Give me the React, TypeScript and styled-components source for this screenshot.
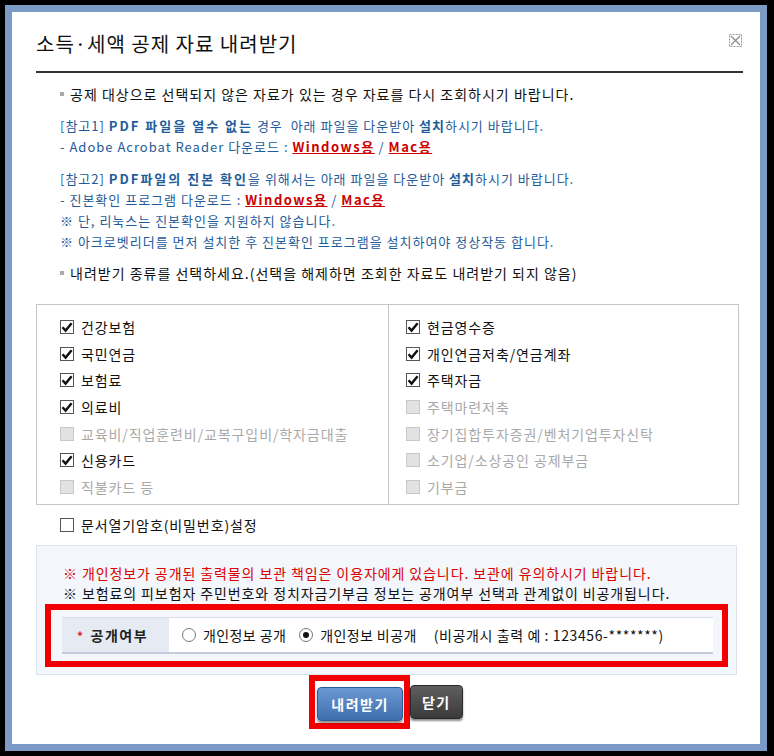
import React from "react";
import styled, { createGlobalStyle } from "styled-components";

const GlobalStyle = createGlobalStyle`
  body {
    margin: 0;
    background: #000;
    font-family: "Noto Sans CJK KR", "Liberation Sans", sans-serif;
  }
`;

const Window = styled.div`
  box-sizing: border-box;
  margin: 5px 0 0 5px;
  width: 762px;
  height: 746px;
  border: 7px solid #7b9ac5;
  background: #fff;
  padding: 0 17px 0 24px;
`;

const Header = styled.div`
  box-sizing: border-box;
  display: flex;
  justify-content: space-between;
  align-items: center;
  height: 61px;
  padding-top: 3px;
  border-bottom: 2px solid #333;
`;

const Title = styled.h1`
  margin: 0;
  font-size: 20px;
  font-weight: normal;
  color: #111;
  letter-spacing: 1px;
`;

const CloseIcon = styled.span`
  align-self: flex-start;
  margin-top: 19px;
  margin-right: 1px;
  display: flex;
`;

const Bullet = styled.p`
  display: flex;
  align-items: center;
  gap: 6px;
  margin: 11px 0 0;
  padding-left: 24px;
  font-size: 14px;
  line-height: 20px;
  letter-spacing: 1px;
  color: #111;
  white-space: nowrap;

  &::before {
    content: "";
    width: 4px;
    height: 4px;
    background: #aaa;
  }
`;

const RefBlock = styled.div`
  margin-top: 11px;
  padding-left: 24px;
  font-size: 13px;
  line-height: 21px;
  letter-spacing: 1px;
  color: #1f5c99;
`;

const Line = styled.div`
  white-space: nowrap;
`;

const Strong = styled.b`
  letter-spacing: 2px;
`;

const DownLink = styled.a`
  color: #cc0000;
  font-weight: bold;
  text-decoration: underline;
  letter-spacing: 1.5px;
`;

const KindBox = styled.div`
  display: grid;
  grid-template-columns: 351px 1fr;
  margin: 21px 4px 0 0;
  border: 1px solid #c6c6c6;
`;

const KindColumn = styled.div<{ $pad: number; $divider?: boolean }>`
  display: flex;
  flex-direction: column;
  padding: 9px 0 4px ${(p) => p.$pad}px;
  border-left: ${(p) => (p.$divider ? "1px solid #c6c6c6" : "none")};
`;

const CheckRow = styled.label<{ $disabled?: boolean }>`
  display: flex;
  align-items: center;
  gap: 7px;
  height: 26.6px;
  font-size: 14px;
  letter-spacing: 0.9px;
  white-space: nowrap;
  color: ${(p) => (p.$disabled ? "#a9a9a9" : "#111")};
`;

const PasswordRow = styled(CheckRow)`
  margin: 10px 0 0 24px;
  height: 20px;
`;

const Box = styled.span<{ $disabled?: boolean }>`
  box-sizing: border-box;
  flex: none;
  display: inline-flex;
  align-items: center;
  justify-content: center;
  width: 14px;
  height: 14px;
  border: 1px solid ${(p) => (p.$disabled ? "#c8c8c8" : "#555")};
  background: ${(p) => (p.$disabled ? "#e2e2e2" : "#fff")};
`;

const Panel = styled.div`
  margin: 10px 6px 0 0;
  padding: 17px 8px 7px;
  background: #f3f6fb;
  border: 1px solid #dde3ec;
`;

const Note = styled.p<{ $red?: boolean }>`
  margin: 0;
  padding-left: 18px;
  font-size: 14px;
  line-height: 20px;
  letter-spacing: 0.9px;
  white-space: nowrap;
  color: ${(p) => (p.$red ? "#d80000" : "#111")};
`;

const Highlight = styled.div`
  margin-top: 1px;
  padding: 7px 9px 7px 11px;
  border: 6px solid #f00000;
`;

const OpenTable = styled.div`
  display: grid;
  grid-template-columns: 107px 1fr;
  height: 37px;
  box-sizing: border-box;
  border-top: 1px solid #d9dfe8;
  border-bottom: 2px solid #c3ccd8;
  background: #fff;
`;

const HeadCell = styled.div`
  display: flex;
  align-items: center;
  gap: 6px;
  padding-left: 15px;
  background: #e6ebf3;
  font-size: 14px;
  font-weight: bold;
  letter-spacing: 1.5px;
  color: #222;

  &::before {
    content: "*";
    color: #e02020;
    font-size: 12px;
  }
`;

const ValueCell = styled.div`
  display: flex;
  align-items: center;
  padding-left: 13px;
  gap: 13px;
  font-size: 14px;
  letter-spacing: 0.4px;
  color: #111;
  white-space: nowrap;
`;

const RadioLabel = styled.label`
  display: flex;
  align-items: center;
  gap: 7px;
`;

const Radio = styled.span<{ $on?: boolean }>`
  box-sizing: border-box;
  flex: none;
  display: inline-flex;
  align-items: center;
  justify-content: center;
  width: 14px;
  height: 14px;
  border-radius: 50%;
  border: 1px solid #777;
  background: #fff;

  &::after {
    content: "";
    display: ${(p) => (p.$on ? "block" : "none")};
    width: 6px;
    height: 6px;
    border-radius: 50%;
    background: #111;
  }
`;

const Hint = styled.span`
  margin-left: 10px;
  letter-spacing: 0.6px;
`;

const ButtonRow = styled.div`
  display: flex;
  justify-content: center;
  align-items: center;
  margin-right: 7px;
`;

const FocusFrame = styled.div`
  padding: 6px 1px 2px 2px;
  border: 6px solid #f00000;
  display: flex;
`;

const Button = styled.button<{ $dark?: boolean }>`
  height: 34px;
  padding: 0 ${(p) => (p.$dark ? "11px" : "13px")};
  border: 1px solid ${(p) => (p.$dark ? "#2a2a2a" : "#2f5b94")};
  border-radius: 4px;
  background: ${(p) =>
    p.$dark
      ? "linear-gradient(#5f5f5f, #3a3a3a)"
      : "linear-gradient(#6b98d2, #3f6fae)"};
  box-shadow: 0 2px 2px rgba(0, 0, 0, 0.45);
  color: #fff;
  font-family: inherit;
  font-size: 14px;
  font-weight: bold;
  letter-spacing: 1.5px;
  cursor: pointer;
`;

const Check = ({ on, disabled }: { on?: boolean; disabled?: boolean }) => (
  <Box $disabled={disabled}>
    {on && (
      <svg width="12" height="12" viewBox="0 0 12 12">
        <path
          d="M1.5 6.2 L4.6 9.6 L10.6 2.2"
          fill="none"
          stroke="#111"
          strokeWidth="2.4"
        />
      </svg>
    )}
  </Box>
);

const left = [
  { t: "건강보험", on: true },
  { t: "국민연금", on: true },
  { t: "보험료", on: true },
  { t: "의료비", on: true },
  { t: "교육비/직업훈련비/교복구입비/학자금대출", off: true },
  { t: "신용카드", on: true },
  { t: "직불카드 등", off: true },
];

const right = [
  { t: "현금영수증", on: true },
  { t: "개인연금저축/연금계좌", on: true },
  { t: "주택자금", on: true },
  { t: "주택마련저축", off: true },
  { t: "장기집합투자증권/벤처기업투자신탁", off: true },
  { t: "소기업/소상공인 공제부금", off: true },
  { t: "기부금", off: true },
];

type Item = { t: string; on?: boolean; off?: boolean };

const KindList = ({ items }: { items: Item[] }) => (
  <>
    {items.map((it) => (
      <CheckRow key={it.t} $disabled={it.off}>
        <Check on={it.on} disabled={it.off} />
        {it.t}
      </CheckRow>
    ))}
  </>
);

export default function App() {
  return (
    <>
      <GlobalStyle />
      <Window>
        <Header>
          <Title>소득·세액 공제 자료 내려받기</Title>
          <CloseIcon>
            <svg width="13" height="13" viewBox="0 0 13 13">
              <rect
                x="0.5"
                y="0.5"
                width="12"
                height="12"
                fill="none"
                stroke="#9a9a9a"
                strokeDasharray="2 1"
              />
              <path d="M2 2 L11 11 M11 2 L2 11" stroke="#8a8a8a" strokeWidth="1.2" />
            </svg>
          </CloseIcon>
        </Header>

        <Bullet>
          공제 대상으로 선택되지 않은 자료가 있는 경우 자료를 다시 조회하시기 바랍니다.
        </Bullet>

        <RefBlock>
          <Line>
            [참고1] <Strong>PDF 파일을 열수 없는</Strong> 경우 &nbsp;아래 파일을 다운받아 <b>설치</b>하시기 바랍니다.
          </Line>
          <Line>
            - Adobe Acrobat Reader 다운로드 : <DownLink>Windows용</DownLink> / <DownLink>Mac용</DownLink>
          </Line>
        </RefBlock>

        <RefBlock>
          <Line>
            [참고2] <Strong>PDF파일의 진본 확인</Strong>을 위해서는 아래 파일을 다운받아 <b>설치</b>하시기 바랍니다.
          </Line>
          <Line>
            - 진본확인 프로그램 다운로드 : <DownLink>Windows용</DownLink> / <DownLink>Mac용</DownLink>
          </Line>
          <Line>※ 단, 리눅스는 진본확인을 지원하지 않습니다.</Line>
          <Line>※ 아크로벳리더를 먼저 설치한 후 진본확인 프로그램을 설치하여야 정상작동 합니다.</Line>
        </RefBlock>

        <Bullet>
          내려받기 종류를 선택하세요.(선택을 해제하면 조회한 자료도 내려받기 되지 않음)
        </Bullet>

        <KindBox>
          <KindColumn $pad={23}>
            <KindList items={left} />
          </KindColumn>
          <KindColumn $pad={17} $divider>
            <KindList items={right} />
          </KindColumn>
        </KindBox>

        <PasswordRow>
          <Check />
          문서열기암호(비밀번호)설정
        </PasswordRow>

        <Panel>
          <Note $red>
            ※ 개인정보가 공개된 출력물의 보관 책임은 이용자에게 있습니다. 보관에 유의하시기 바랍니다.
          </Note>
          <Note>
            ※ 보험료의 피보험자 주민번호와 정치자금기부금 정보는 공개여부 선택과 관계없이 비공개됩니다.
          </Note>
          <Highlight>
            <OpenTable>
              <HeadCell>공개여부</HeadCell>
              <ValueCell>
                <RadioLabel>
                  <Radio />
                  개인정보 공개
                </RadioLabel>
                <RadioLabel>
                  <Radio $on />
                  개인정보 비공개
                  <Hint>(비공개시 출력 예 : 123456-*******)</Hint>
                </RadioLabel>
              </ValueCell>
            </OpenTable>
          </Highlight>
        </Panel>

        <ButtonRow>
          <FocusFrame>
            <Button>내려받기</Button>
          </FocusFrame>
          <Button $dark>닫기</Button>
        </ButtonRow>
      </Window>
    </>
  );
}
